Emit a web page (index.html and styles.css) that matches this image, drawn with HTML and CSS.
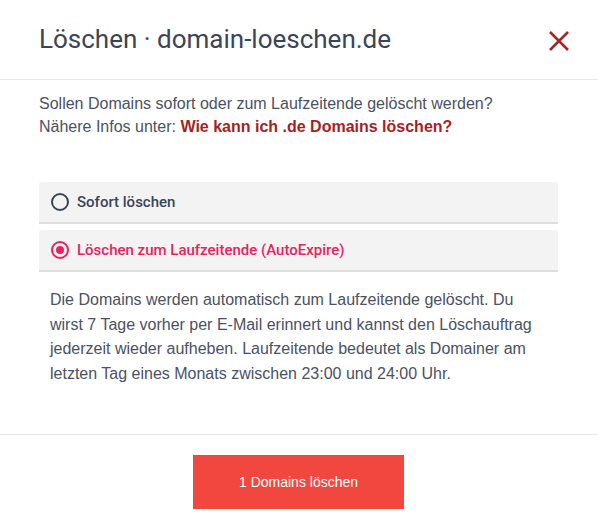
FILE: index.html
```html
<!DOCTYPE html>
<html lang="de">
<head>
<meta charset="utf-8">
<title>Löschen</title>
<link rel="stylesheet" href="styles.css">
</head>
<body>
<div class="modal">
  <header class="modal-header">
    <h1 class="modal-title">Löschen · domain-loeschen.de</h1>
    <button class="close" aria-label="Schließen">
      <svg width="22" height="22" viewBox="0 0 22 22"><path d="M2 2 L20 20 M20 2 L2 20" stroke="#a3262a" stroke-width="2.6" fill="none"/></svg>
    </button>
  </header>
  <main class="modal-body">
    <p class="intro">Sollen Domains sofort oder zum Laufzeitende gelöscht werden?<br>Nähere Infos unter: <a class="link" href="#">Wie kann ich .de Domains löschen?</a></p>
    <div class="options">
      <label class="option">
        <span class="radio"></span>
        <span class="option-label">Sofort löschen</span>
      </label>
      <label class="option option-active">
        <span class="radio radio-checked"></span>
        <span class="option-label">Löschen zum Laufzeitende (AutoExpire)</span>
      </label>
    </div>
    <p class="desc">Die Domains werden automatisch zum Laufzeitende gelöscht. Du wirst 7 Tage vorher per E-Mail erinnert und kannst den Löschauftrag jederzeit wieder aufheben. Laufzeitende bedeutet als Domainer am letzten Tag eines Monats zwischen 23:00 und 24:00 Uhr.</p>
  </main>
  <footer class="modal-footer">
    <button class="btn-danger">1 Domains löschen</button>
  </footer>
</div>
</body>
</html>
```
FILE: styles.css
```css
* { box-sizing: border-box; }
html, body { margin: 0; padding: 0; background: #fff; }
body { width: 598px; height: 528px; overflow: hidden; font-family: "Liberation Sans", Arial, sans-serif; color: #4a5263; }

.modal { display: flex; flex-direction: column; height: 528px; }

.modal-header {
  height: 80px;
  border-bottom: 1px solid #e8e8ec;
  display: flex;
  align-items: center;
  justify-content: space-between;
  padding: 0 28px 0 39px;
}
.modal-title {
  margin: 0;
  font-family: Roboto, sans-serif;
  font-weight: 400;
  font-size: 26px;
  color: #3b4556;
  padding-bottom: 1px;
}
.close {
  border: 0; background: none; padding: 0; width: 22px; height: 22px; display: block; margin-top: 3px;
}
.close svg { display: block; }

.modal-body { padding: 12px 40px 0 39px; height: 354px; }
.intro { margin: 0; font-size: 16px; line-height: 23px; color: #4a5263; }
.link { color: #a51f24; font-weight: 700; text-decoration: none; }

.options { margin-top: 44px; display: flex; flex-direction: column; gap: 6px; }
.option {
  display: flex; align-items: center; gap: 8px;
  height: 42px;
  padding: 0 0 0 12px;
  background: #f3f3f3;
  border-bottom: 2px solid #dfdfe1;
  border-radius: 3px 3px 0 0;
}
.radio {
  width: 18px; height: 18px; border-radius: 50%;
  border: 2px solid #3a4556;
  display: flex; align-items: center; justify-content: center;
  flex: none;
}
.radio-checked { border-color: #e8235f; }
.radio-checked::after { content: ""; width: 8px; height: 8px; border-radius: 50%; background: #e8235f; }
.option-label { font-family: Roboto, sans-serif; font-weight: 500; font-size: 15px; color: #3b4556; }
.option-active .option-label { color: #e8235f; }

.desc { margin: 16px 0 0; padding: 0 15px 0 11px; font-size: 16px; line-height: 24.5px; color: #4a5263; }

.modal-footer {
  border-top: 1px solid #e8e8ec;
  flex: 1;
  display: flex; justify-content: center;
  padding-top: 20px;
}
.btn-danger {
  width: 211px; height: 54px;
  background: #f2473f; color: #fff; border: 0;
  font-family: "Liberation Sans", Arial, sans-serif; font-size: 14px;
  margin-right: 1px;
}
```
